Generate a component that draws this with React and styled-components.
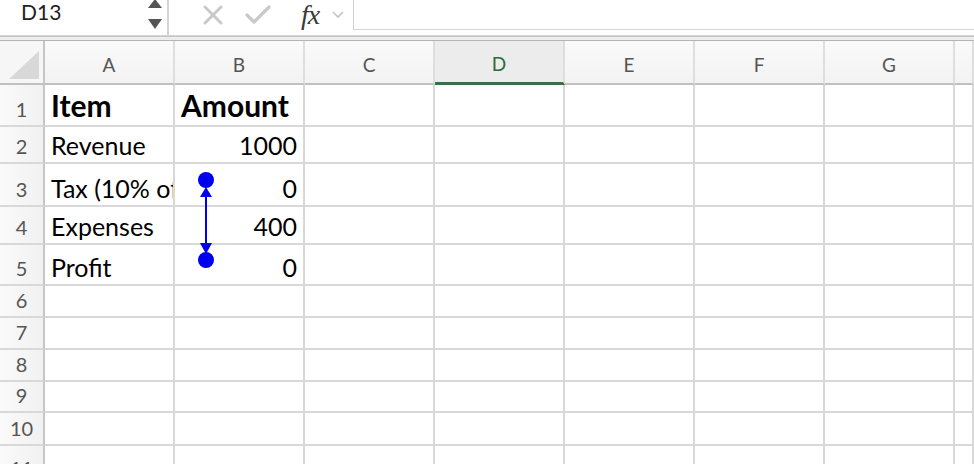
import React from 'react';
import styled, { createGlobalStyle } from 'styled-components';

const GlobalStyle = createGlobalStyle`
  html, body {
    margin: 0;
    padding: 0;
    background: #ffffff;
    overflow: hidden;
  }
  body {
    font-family: Lato, "Open Sans", sans-serif;
  }
`;

const Page = styled.div`
  position: relative;
  width: 974px;
  height: 464px;
  overflow: hidden;
  background: #fff;
`;

const Toolbar = styled.div`
  display: flex;
  align-items: stretch;
  height: 36px;
  box-sizing: border-box;
  border-bottom: 1px solid #d6d6d6;
  background: #fff;
  overflow: hidden;
`;

const NameBox = styled.div`
  display: flex;
  align-items: center;
  justify-content: space-between;
  width: 169px;
  box-sizing: border-box;
  padding: 0 5px 12px 21px;
  border-right: 2px solid #d4d4d4;
  font-size: 21px;
  color: #222;
`;

const Spinner = styled.div`
  display: flex;
  flex-direction: column;
  align-items: center;
  gap: 11px;
  margin-top: 4px;
`;

const Tri = styled.div`
  width: 0;
  height: 0;
  border-left: 7px solid transparent;
  border-right: 7px solid transparent;
  ${(p) => (p.$up ? 'border-bottom: 9px solid #555;' : 'border-top: 10px solid #555;')}
`;

const IconGroup = styled.div`
  display: flex;
  align-items: center;
  padding: 0 0 6px 30px;
`;

const IconSlot = styled.div`
  display: flex;
  align-items: center;
  justify-content: center;
  width: ${(p) => p.$w}px;
`;

const Fx = styled.span`
  font-family: "Liberation Serif", "DejaVu Serif", serif;
  font-style: italic;
  font-size: 28px;
  color: #3a3a3a;
  letter-spacing: -1px;
`;

const FormulaInput = styled.div`
  flex: 1;
  margin-left: 8px;
  height: 30px;
  box-sizing: border-box;
  border-left: 1px solid #d0d0d0;
  border-bottom: 1px solid #d6d6d6;
`;

const Separator = styled.div`
  height: 5px;
  box-sizing: border-box;
  background: #ededed;
  border-top: 1px solid #c4c4c4;
  border-bottom: 1px solid #b4b4b4;
`;

const Grid = styled.div`
  display: grid;
  grid-template-columns: 45px repeat(7, 130px) 1fr;
  grid-template-rows: 44px 42px 37px 43px 38px 41px 32px 32px 32px 31px 33px 40px;
`;

const Corner = styled.div`
  position: relative;
  box-sizing: border-box;
  background: #f6f6f6;
  border-right: 2px solid #c6c6c6;
  border-bottom: 2px solid #c0c0c0;
`;

const CornerTri = styled.div`
  position: absolute;
  right: 4px;
  bottom: 4px;
  width: 0;
  height: 0;
  border-left: 30px solid transparent;
  border-bottom: 28px solid #d8d8d8;
`;

const ColHead = styled.div`
  display: flex;
  align-items: center;
  justify-content: center;
  box-sizing: border-box;
  padding-top: 4px;
  font-size: 19px;
  color: ${(p) => (p.$active ? '#2c6a3c' : '#555')};
  background: ${(p) =>
    p.$active ? '#ececec' : 'linear-gradient(to bottom, #fafafa, #f3f3f3)'};
  border-right: 2px solid #dedede;
  border-bottom: ${(p) => (p.$active ? '3px solid #3a6f47' : '2px solid #c0c0c0')};
`;

const RowHead = styled.div`
  display: flex;
  align-items: flex-end;
  justify-content: center;
  box-sizing: border-box;
  padding-bottom: 4px;
  font-size: 20px;
  color: #555;
  background: linear-gradient(to right, #fafafa, #f1f1f1);
  border-right: 2px solid #c6c6c6;
  border-bottom: 2px solid #d8d8d8;
`;

const Cell = styled.div`
  display: flex;
  align-items: flex-end;
  justify-content: ${(p) => (p.$num ? 'flex-end' : 'flex-start')};
  box-sizing: border-box;
  padding: 0 6px 2px 6px;
  overflow: hidden;
  white-space: nowrap;
  font-size: ${(p) => (p.$bold ? '30px' : '25px')};
  font-weight: ${(p) => (p.$bold ? 700 : 400)};
  color: #000;
  border-right: 2px solid #d8d8d8;
  border-bottom: 2px solid #d8d8d8;
`;

const Overlay = styled.svg`
  position: absolute;
  left: 190px;
  top: 166px;
  pointer-events: none;
`;

const cols = ['A', 'B', 'C', 'D', 'E', 'F', 'G', ''];

const data = [
  [{ v: 'Item', bold: true }, { v: 'Amount', bold: true }],
  [{ v: 'Revenue' }, { v: '1000', num: true }],
  [{ v: 'Tax (10% of Revenue)' }, { v: '0', num: true }],
  [{ v: 'Expenses' }, { v: '400', num: true }],
  [{ v: 'Profit' }, { v: '0', num: true }],
];

function DependencyArrow() {
  // trace-precedents style arrow between B3 and B5
  return (
    <Overlay width="32" height="110" viewBox="0 0 32 110">
      <circle cx="16" cy="14" r="8" fill="#0000f0" />
      <polygon points="16,21 10,31 22,31" fill="#0000f0" />
      <line x1="16" y1="26" x2="16" y2="82" stroke="#0000f0" strokeWidth="2" />
      <polygon points="10,77 22,77 16,88" fill="#0000f0" />
      <circle cx="16" cy="94" r="8" fill="#0000f0" />
    </Overlay>
  );
}

export default function App() {
  const rowCount = 11;
  return (
    <Page>
      <GlobalStyle />
      <Toolbar>
        <NameBox>
          <span>D13</span>
          <Spinner>
            <Tri $up />
            <Tri />
          </Spinner>
        </NameBox>
        <IconGroup>
          <IconSlot $w={28}>
            <svg width="22" height="22" viewBox="0 0 22 22">
              <path d="M3 3 L19 19 M19 3 L3 19" stroke="#c9c9c9" strokeWidth="3" strokeLinecap="round" />
            </svg>
          </IconSlot>
          <IconSlot $w={62}>
            <svg width="26" height="20" viewBox="0 0 26 20">
              <path d="M2 10 L9 17 L24 2" stroke="#c9c9c9" strokeWidth="3.2" fill="none" strokeLinecap="round" strokeLinejoin="round" />
            </svg>
          </IconSlot>
          <IconSlot $w={42}>
            <Fx>fx</Fx>
          </IconSlot>
          <IconSlot $w={14}>
            <svg width="12" height="8" viewBox="0 0 12 8">
              <path d="M1 1 L6 6 L11 1" stroke="#c4c4c4" strokeWidth="1.6" fill="none" />
            </svg>
          </IconSlot>
        </IconGroup>
        <FormulaInput />
      </Toolbar>
      <Separator />
      <Grid>
        <Corner>
          <CornerTri />
        </Corner>
        {cols.map((c, i) => (
          <ColHead key={'h' + i} $active={c === 'D'}>
            {c}
          </ColHead>
        ))}
        {Array.from({ length: rowCount }).map((_, r) => (
          <React.Fragment key={'r' + r}>
            <RowHead>{r + 1}</RowHead>
            {cols.map((c, ci) => {
              const cell = data[r] && data[r][ci];
              return (
                <Cell key={ci} $bold={cell && cell.bold} $num={cell && cell.num}>
                  {cell ? cell.v : ''}
                </Cell>
              );
            })}
          </React.Fragment>
        ))}
      </Grid>
      <DependencyArrow />
    </Page>
  );
}
